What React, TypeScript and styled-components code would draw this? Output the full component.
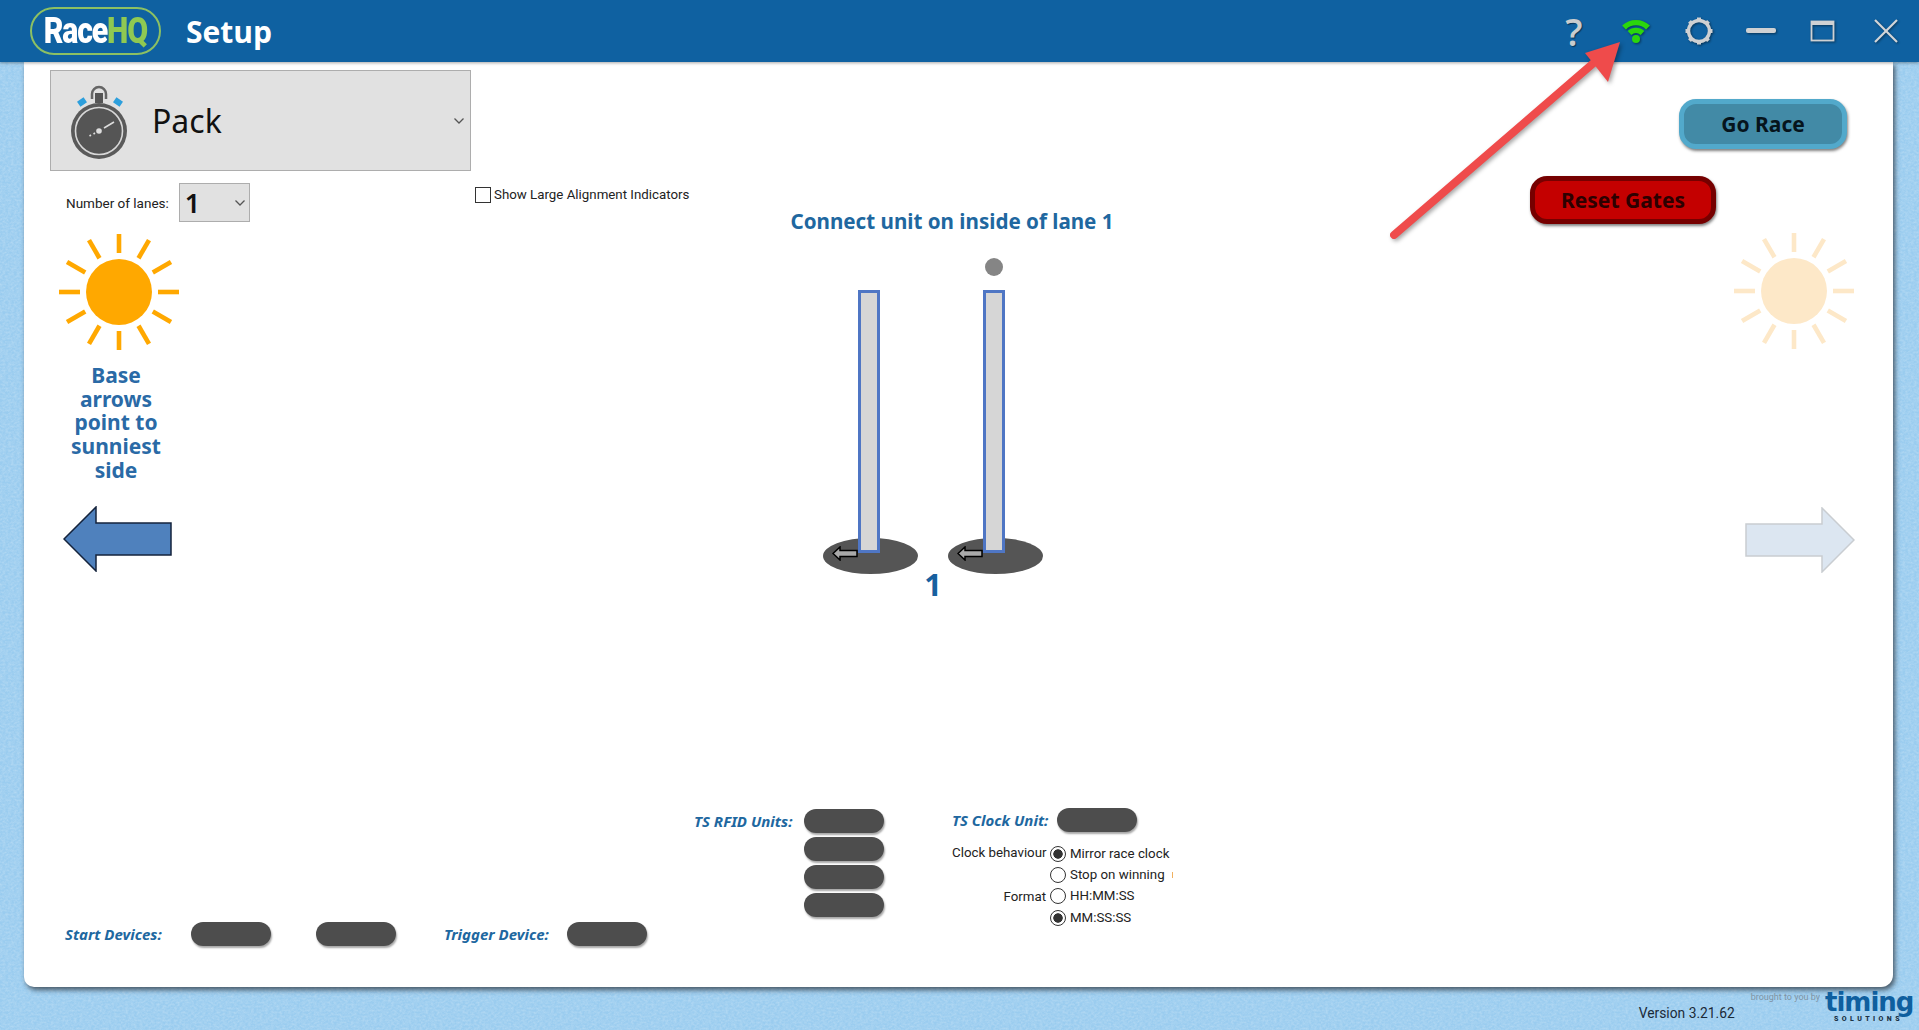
import React from 'react';
import styled, { createGlobalStyle } from 'styled-components';

const texture = `url("data:image/svg+xml,%3Csvg xmlns='http://www.w3.org/2000/svg' width='300' height='300'%3E%3Cfilter id='n'%3E%3CfeTurbulence type='fractalNoise' baseFrequency='0.35 0.5' numOctaves='3' stitchTiles='stitch'/%3E%3CfeColorMatrix values='0 0 0 0 1 0 0 0 0 1 0 0 0 0 1 0 0 0 0.4 -0.12'/%3E%3C/filter%3E%3Crect width='300' height='300' filter='url(%23n)'/%3E%3C/svg%3E")`;

const GlobalStyle = createGlobalStyle`
    html, body {
        margin: 0;
        padding: 0;
        overflow: hidden;
    }
    * {
        box-sizing: border-box;
    }
`;

const Page = styled.div`
    position: relative;
    width: 1919px;
    height: 1030px;
    display: flex;
    flex-direction: column;
    background-color: #9accef;
    background-image: ${texture};
    font-family: Roboto, "Noto Sans", sans-serif;
    color: #222;
    overflow: hidden;
`;

const Header = styled.header`
    height: 62px;
    flex: none;
    display: flex;
    align-items: center;
    padding: 0 2px 0 30px;
    background: #0f61a1;
    box-shadow: 0 1px 3px rgba(0, 0, 0, 0.35);
    position: relative;
    z-index: 2;
`;

const Logo = styled.div`
    width: 131px;
    height: 48px;
    border: 2px solid #8cc063;
    border-radius: 24px;
    display: flex;
    align-items: center;
    justify-content: center;
`;

const LogoText = styled.span`
    font-family: Roboto, sans-serif;
    font-weight: 900;
    font-size: 36px;
    letter-spacing: -1.4px;
    color: #fff;
    transform: scaleX(0.84);
    span {
        color: #8fc952;
    }
`;

const Title = styled.h1`
    margin: 0 0 0 25px;
    font-family: "Open Sans", sans-serif;
    font-size: 30px;
    font-weight: 700;
    color: #fff;
    flex: 1;
`;

const HeaderIcon = styled.button`
    width: 62.4px;
    height: 50px;
    padding: 0;
    border: 0;
    background: none;
    display: flex;
    align-items: center;
    justify-content: center;
    svg {
        filter: drop-shadow(1px 1px 1px rgba(0, 0, 0, 0.45));
    }
`;

const Help = styled.span`
    font-family: "Open Sans", sans-serif;
    font-size: 38px;
    line-height: 46px;
    font-weight: 600;
    color: #c9ccce;
    text-shadow: 1px 1px 1px rgba(0, 0, 0, 0.45);
`;

const Body = styled.main`
    flex: 1;
    min-height: 0;
    display: flex;
    padding: 0 26px 0 24px;
`;

const Panel = styled.section`
    flex: 1;
    display: flex;
    flex-direction: column;
    background: #fff;
    border-radius: 0 0 12px 10px;
    box-shadow: 2px 3px 5px rgba(50, 60, 70, 0.8);
    padding: 8px 46px 41px 26px;
`;

const Workspace = styled.div`
    flex: 1;
    display: flex;
    min-height: 0;
`;

const LeftColumn = styled.div`
    width: 425px;
    flex: none;
    display: flex;
    flex-direction: column;
`;

const Combo = styled.div`
    width: 421px;
    height: 101px;
    background: #e1e1e1;
    border: 1px solid #adadad;
    display: flex;
    align-items: center;
    padding: 0 5px 0 19px;
`;

const ComboText = styled.span`
    flex: 1;
    margin-left: 22px;
    font-family: "Noto Sans", sans-serif;
    font-size: 32px;
    color: #111;
`;

const LanesRow = styled.div`
    display: flex;
    align-items: center;
    gap: 10px;
    margin: 12px 0 0 16px;
    font-size: 13.5px;
`;

const LaneSelect = styled.div`
    width: 71px;
    height: 39px;
    background: #e1e1e1;
    border: 1px solid #adadad;
    display: flex;
    align-items: center;
    justify-content: space-between;
    padding: 0 3px 0 5px;
    font-family: "Noto Sans", sans-serif;
    font-size: 27px;
    font-weight: 600;
    color: #111;
`;

const Sun = styled.svg<{ $faded?: boolean }>`
    display: block;
    width: 120px;
    height: 120px;
    color: ${props => props.$faded ? '#fde8c8' : '#ffa800'};
`;

const LeftSun = styled(Sun)`
    margin: 10px 0 0 9px;
`;

const SunHint = styled.div`
    width: 100px;
    margin: 12px 0 0 16px;
    text-align: center;
    font-family: "Noto Sans", sans-serif;
    font-size: 21px;
    line-height: 23.7px;
    font-weight: 700;
    color: #2a6aa6;
`;

const BigArrow = styled.svg`
    display: block;
    width: 110px;
    height: 66px;
`;

const LeftArrow = styled(BigArrow)`
    margin: 23px 0 0 13px;
`;

const CenterColumn = styled.div`
    width: 954px;
    flex: none;
    display: flex;
    flex-direction: column;
`;

const CheckRow = styled.label`
    display: flex;
    align-items: center;
    gap: 3px;
    margin-top: 116px;
    font-size: 13.3px;
    line-height: 18px;
`;

const CheckBox = styled.span`
    width: 16px;
    height: 16px;
    background: #fff;
    border: 1px solid #333;
`;

const Heading = styled.h2`
    margin: 2px 0 0;
    text-align: center;
    font-family: "Noto Sans", sans-serif;
    font-size: 20.6px;
    line-height: 30px;
    font-weight: 700;
    color: #20679f;
`;

const LaneDiagram = styled.div`
    width: 220px;
    margin: 22px 0 0 348px;
    display: grid;
    grid-template-columns: 95px 95px;
    column-gap: 30px;
`;

const Station = styled.div`
    display: flex;
    flex-direction: column;
    height: 316px;
    justify-content: flex-end;
    align-items: flex-start;
`;

const StatusDot = styled.span`
    width: 18px;
    height: 18px;
    margin: 0 0 14px 37px;
    border-radius: 50%;
    background: #858585;
`;

const Pole = styled.div`
    width: 22px;
    height: 263px;
    flex: none;
    margin-left: 35px;
    background: #d6d6d6;
    border: 3px solid #4f76c4;
    position: relative;
    z-index: 1;
`;

const PoleBase = styled.div`
    width: 95px;
    height: 36px;
    flex: none;
    margin-top: -15px;
    border-radius: 50%;
    background: #555;
    position: relative;
`;

const BaseArrow = styled.svg`
    position: absolute;
    left: 9px;
    top: 8px;
    width: 26px;
    height: 15px;
`;

const LaneNumber = styled.div`
    grid-column: 1 / 3;
    text-align: center;
    margin-top: -8px;
    font-family: "Noto Sans", sans-serif;
    font-size: 31px;
    line-height: 36px;
    font-weight: 700;
    color: #17609f;
`;

const RightColumn = styled.div`
    flex: 1;
    display: flex;
    flex-direction: column;
    align-items: flex-end;
    padding-top: 29px;
`;

const GoRace = styled.button`
    width: 168px;
    height: 50px;
    border: 5px solid #52a9cb;
    border-radius: 17px;
    background: #428aa6;
    box-shadow: 1px 2px 3px rgba(0, 0, 0, 0.5);
    font-family: "Noto Sans", sans-serif;
    font-size: 21px;
    font-weight: 700;
    color: #06141c;
`;

const ResetGates = styled.button`
    width: 186px;
    height: 48px;
    margin: 27px 131px 0 0;
    border: 5px solid #760000;
    border-radius: 17px;
    background: #c40000;
    box-shadow: 1px 2px 3px rgba(0, 0, 0, 0.5);
    font-family: "Noto Sans", sans-serif;
    font-size: 21px;
    font-weight: 700;
    color: #2c0000;
`;

const RightSun = styled(Sun)`
    margin: 7px -7px 0 0;
`;

const RightArrow = styled(BigArrow)`
    margin: 156px -8px 0 0;
`;

const Devices = styled.div`
    display: flex;
    align-items: flex-end;
    padding-left: 15px;
`;

const DeviceLabel = styled.span`
    font-family: "Noto Sans", sans-serif;
    font-size: 15px;
    font-weight: 700;
    font-style: italic;
    color: #20679f;
    white-space: nowrap;
`;

const DevicePill = styled.span`
    display: block;
    width: 80px;
    height: 24px;
    border-radius: 12px;
    background: #4d4d4d;
    box-shadow: 1px 2px 2px rgba(0, 0, 0, 0.35);
`;

const StartRow = styled.div`
    display: grid;
    grid-template-columns: 126px 125px 128px 123px 80px;
    align-items: center;
    width: 629px;
`;

const RfidGroup = styled.div`
    width: 258px;
    display: grid;
    grid-template-columns: 110px 80px;
    row-gap: 4px;
    align-items: center;
    margin-bottom: 29px;
    ${DeviceLabel} {
        align-self: center;
        grid-row: 1;
    }
    ${DevicePill} {
        grid-column: 2;
    }
`;

const ClockGroup = styled.div`
    width: 220px;
    margin-bottom: 18px;
    display: flex;
    flex-direction: column;
`;

const ClockUnitRow = styled.div`
    display: grid;
    grid-template-columns: 105px 80px;
    align-items: center;
    margin-bottom: 11px;
`;

const OptionGrid = styled.div`
    display: grid;
    grid-template-columns: 94px 1fr;
    column-gap: 4px;
    font-size: 13.3px;
    line-height: 20px;
`;

const OptionLabel = styled.span<{ $nudge?: number }>`
    text-align: right;
    white-space: nowrap;
    padding-top: ${props => props.$nudge ?? 0}px;
`;

const Radio = styled.span<{ $checked?: boolean }>`
    width: 16px;
    height: 16px;
    flex: none;
    border: 1px solid #333;
    border-radius: 50%;
    background: ${props => props.$checked ? 'radial-gradient(circle, #333 0 4.4px, #fff 5px)' : '#fff'};
`;

const RadioRow = styled.div`
    grid-column: 2;
    display: flex;
    align-items: center;
    gap: 4px;
    height: 21px;
    white-space: nowrap;
`;

const ClippedMark = styled.span`
    width: 1px;
    height: 6px;
    margin-left: 3px;
    background: #f0b060;
`;

const Footer = styled.footer`
    height: 43px;
    flex: none;
    display: flex;
    justify-content: flex-end;
    align-items: flex-start;
    padding-right: 7px;
`;

const Version = styled.span`
    margin-top: 16px;
    font-size: 13.8px;
    line-height: 20px;
    color: #1b2a38;
`;

const BroughtBy = styled.span`
    margin: 4px 5px 0 16px;
    font-size: 9px;
    line-height: 13px;
    color: #7f93a3;
`;

const Brand = styled.div`
    width: 87px;
    margin-top: 3px;
    text-align: center;
    color: #0f5f9f;
`;

const BrandName = styled.div`
    font-family: "DejaVu Sans", sans-serif;
    font-size: 26px;
    line-height: 25px;
    font-weight: 700;
    letter-spacing: -1px;
`;

const BrandSub = styled.div`
    font-size: 7px;
    line-height: 8px;
    font-weight: 900;
    letter-spacing: 3.4px;
    color: #1c3346;
`;

const AnnotationArrow = styled.svg`
    position: absolute;
    left: 1380px;
    top: 30px;
    width: 250px;
    height: 215px;
    z-index: 3;
    filter: drop-shadow(2px 2px 2px rgba(0, 0, 0, 0.35));
`;

const Chevron = () => (
    <svg width="12" height="8" viewBox="0 0 12 8">
        <path d="M1.5 1.5 6 6l4.5-4.5" fill="none" stroke="#555" strokeWidth="1.3" />
    </svg>
);

const SunIcon: React.FC<{ as?: typeof Sun; faded?: boolean }> = ({ as: Comp = Sun, faded }) => (
    <Comp $faded={faded} viewBox="-60 -60 120 120">
        <circle r="33" fill="currentColor" />
        {Array.from({ length: 12 }, (_, i) => (
            <line key={i} x1="0" y1="-39" x2="0" y2={i % 6 === 0 ? -58 : -60} stroke="currentColor" strokeWidth="4.6" transform={`rotate(${i * 30})`} />
        ))}
    </Comp>
);

const Stopwatch = () => (
    <svg width="60" height="80" viewBox="70 80 60 80">
        <path d="M92 98v-5a7 7 0 0 1 14 0v5" fill="none" stroke="#666" strokeWidth="2.5" />
        <rect x="95" y="92" width="8" height="10" fill="#555" />
        <rect x="78" y="98" width="8" height="6" fill="#2d9fdc" transform="rotate(-35 82 101)" />
        <rect x="114" y="98" width="8" height="6" fill="#2d9fdc" transform="rotate(35 118 101)" />
        <circle cx="99" cy="130" r="28" fill="#5a5a5a" />
        <circle cx="99" cy="130" r="23.5" fill="#555" stroke="#d8d8d8" strokeWidth="1.6" />
        <circle cx="99" cy="130" r="2.8" fill="#ddd" />
        <path d="M104 127l10-6M91 134l-1.5 1M95 132l-1.5 1" stroke="#ddd" strokeWidth="1.6" />
    </svg>
);

export default function App() {
    return (
        <Page>
            <GlobalStyle />
            <Header>
                <Logo><LogoText>Race<span>HQ</span></LogoText></Logo>
                <Title>Setup</Title>
                <HeaderIcon><Help>?</Help></HeaderIcon>
                <HeaderIcon>
                    <svg width="30" height="26" viewBox="0 0 30 26" fill="none" stroke="#2bd60c" strokeWidth="5.4">
                        <path d="M3 9.5C9.5 3 20.5 3 27 9.5" />
                        <path d="M8.5 15c3.8-3.4 9.2-3.4 13 0" />
                        <circle cx="15" cy="21" r="4" fill="#2bd60c" stroke="none" />
                    </svg>
                </HeaderIcon>
                <HeaderIcon>
                    <svg width="30" height="30" viewBox="0 0 30 30" fill="none" stroke="#cfd1d3" strokeWidth="3.4">
                        <circle cx="15" cy="15" r="10.5" />
                        {Array.from({ length: 8 }, (_, i) => (
                            <line key={i} x1="15" y1="1.5" x2="15" y2="5" strokeWidth="4" transform={`rotate(${i * 45} 15 15)`} />
                        ))}
                    </svg>
                </HeaderIcon>
                <HeaderIcon>
                    <svg width="32" height="8" viewBox="0 0 32 8">
                        <rect x="1" y="1" width="30" height="5" rx="2" fill="#cfd1d3" />
                    </svg>
                </HeaderIcon>
                <HeaderIcon>
                    <svg width="26" height="24" viewBox="0 0 26 24" fill="none" stroke="#cfd1d3" strokeWidth="1.8">
                        <rect x="1.5" y="2.5" width="22" height="19" />
                        <line x1="1" y1="4" x2="24" y2="4" strokeWidth="4" />
                    </svg>
                </HeaderIcon>
                <HeaderIcon>
                    <svg width="26" height="26" viewBox="0 0 26 26" stroke="#d4d6d8" strokeWidth="2.2">
                        <line x1="2" y1="2" x2="24" y2="24" />
                        <line x1="24" y1="2" x2="2" y2="24" />
                    </svg>
                </HeaderIcon>
            </Header>
            <Body>
                <Panel>
                    <Workspace>
                        <LeftColumn>
                            <Combo>
                                <Stopwatch />
                                <ComboText>Pack</ComboText>
                                <Chevron />
                            </Combo>
                            <LanesRow>
                                Number of lanes:
                                <LaneSelect>1<Chevron /></LaneSelect>
                            </LanesRow>
                            <SunIcon as={LeftSun} />
                            <SunHint>Base arrows point to sunniest side</SunHint>
                            <LeftArrow viewBox="-1 -1 110 66">
                                <path d="M0 32 32 0v16h75v32H32v16z" fill="#4f81bd" stroke="#14233c" strokeWidth="1.5" />
                            </LeftArrow>
                        </LeftColumn>
                        <CenterColumn>
                            <CheckRow><CheckBox />Show Large Alignment Indicators</CheckRow>
                            <Heading>Connect unit on inside of lane 1</Heading>
                            <LaneDiagram>
                                <Station>
                                    <Pole />
                                    <PoleBase>
                                        <BaseArrow viewBox="0 0 26 15">
                                            <path d="M1 7.5 8 1v3.5h17v6H8V14z" fill="#aaa" stroke="#000" strokeWidth="1.5" />
                                        </BaseArrow>
                                    </PoleBase>
                                </Station>
                                <Station>
                                    <StatusDot />
                                    <Pole />
                                    <PoleBase>
                                        <BaseArrow viewBox="0 0 26 15">
                                            <path d="M1 7.5 8 1v3.5h17v6H8V14z" fill="#aaa" stroke="#000" strokeWidth="1.5" />
                                        </BaseArrow>
                                    </PoleBase>
                                </Station>
                                <LaneNumber>1</LaneNumber>
                            </LaneDiagram>
                        </CenterColumn>
                        <RightColumn>
                            <GoRace>Go Race</GoRace>
                            <ResetGates>Reset Gates</ResetGates>
                            <SunIcon as={RightSun} faded />
                            <RightArrow viewBox="-1 -1 110 66">
                                <path d="M108 32 76 0v16H0v32h76v16z" fill="#dce6f1" stroke="#c9cdd1" strokeWidth="1.5" />
                            </RightArrow>
                        </RightColumn>
                    </Workspace>
                    <Devices>
                        <StartRow>
                            <DeviceLabel>Start Devices:</DeviceLabel>
                            <DevicePill />
                            <DevicePill />
                            <DeviceLabel>Trigger Device:</DeviceLabel>
                            <DevicePill />
                        </StartRow>
                        <RfidGroup>
                            <DeviceLabel>TS RFID Units:</DeviceLabel>
                            <DevicePill />
                            <DevicePill />
                            <DevicePill />
                            <DevicePill />
                        </RfidGroup>
                        <ClockGroup>
                            <ClockUnitRow>
                                <DeviceLabel>TS Clock Unit:</DeviceLabel>
                                <DevicePill />
                            </ClockUnitRow>
                            <OptionGrid>
                                <OptionLabel>Clock behaviour</OptionLabel>
                                <RadioRow><Radio $checked />Mirror race clock</RadioRow>
                                <RadioRow><Radio />Stop on winning<ClippedMark /></RadioRow>
                                <OptionLabel $nudge={2}>Format</OptionLabel>
                                <RadioRow><Radio />HH:MM:SS</RadioRow>
                                <RadioRow><Radio $checked />MM:SS:SS</RadioRow>
                            </OptionGrid>
                        </ClockGroup>
                    </Devices>
                </Panel>
            </Body>
            <Footer>
                <Version>Version 3.21.62</Version>
                <BroughtBy>brought to you by</BroughtBy>
                <Brand>
                    <BrandName>timing</BrandName>
                    <BrandSub>SOLUTIONS</BrandSub>
                </Brand>
            </Footer>
            <AnnotationArrow viewBox="0 0 250 215">
                <path d="M14 205 224 24" stroke="#ef4b4b" strokeWidth="8" strokeLinecap="round" fill="none" />
                <path d="M240 12 205 23 228 52z" fill="#ef4b4b" />
            </AnnotationArrow>
        </Page>
    );
}
